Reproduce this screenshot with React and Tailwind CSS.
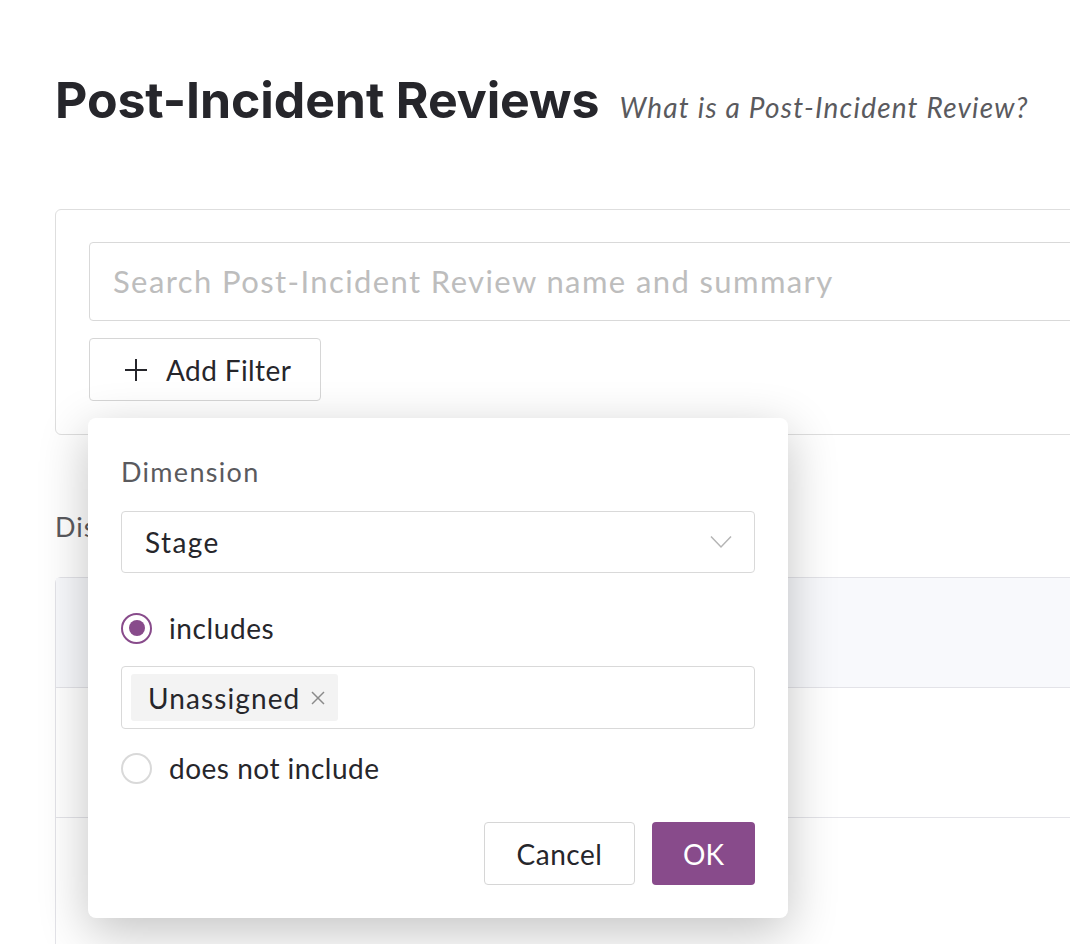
export default function App() {
  const body = { fontFamily: '"Lato", "Noto Sans", sans-serif' };
  return (
    <div className="relative min-h-[944px] w-[1070px] overflow-hidden bg-white" style={body}>
      <div className="w-[1120px] pl-[55px] pt-[70px]">
        {/* Page header */}
        <div className="flex items-baseline gap-[20px]">
          <h1
            className="text-[50px] font-bold leading-[60px] tracking-[-0.1px] text-[#26262b]"
            style={{ fontFamily: '"Inter", "Noto Sans", sans-serif' }}
          >
            Post-Incident Reviews
          </h1>
          <a className="text-[28px] italic tracking-[1.2px] text-[#5a5a5e]">What is a Post-Incident Review?</a>
        </div>

        {/* Search + filter card */}
        <div className="mt-[79px] rounded-[6px] border border-[#dedede] px-[33px] pt-[32px] pb-[33px]">
          <div className="flex h-[79px] items-center rounded-[4px] border border-[#d9d9d9] pl-[23px] text-[31px] tracking-[1.4px] text-[#bdbdbd]">
            Search Post-Incident Review name and summary
          </div>
          <button className="mt-[17px] flex h-[63px] w-[232px] items-center gap-[18px] rounded-[4px] border border-[#d6d6d6] pl-[34px] text-[28px] tracking-[0.4px] text-[#26262b]">
            <svg width="24" height="24" viewBox="0 0 24 24" fill="none" stroke="#26262b" strokeWidth="2">
              <line x1="12" y1="1" x2="12" y2="23" />
              <line x1="1" y1="12" x2="23" y2="12" />
            </svg>
            Add Filter
          </button>
        </div>

        <div className="mt-[74px] text-[27px] leading-[36px] tracking-[1px] text-[#5a5a5e]">Displaying</div>

        {/* Results table */}
        <div className="mt-[32px] rounded-tl-[6px] border-t border-l border-[#e3e3e8]">
          <div className="h-[110px] border-b border-[#e3e3e8] bg-[#f8f9fc]" />
          <div className="h-[130px] border-b border-[#e3e3e8]" />
          <div className="h-[130px] border-b border-[#e3e3e8]" />
        </div>
      </div>

      {/* Filter popover */}
      <div className="absolute left-[88px] top-[418px] w-[700px] rounded-[8px] bg-white px-[33px] pt-[36px] pb-[33px] shadow-[0_14px_50px_rgba(0,0,0,0.24)]">
        <div className="text-[27px] leading-[36px] tracking-[1.3px] text-[#5a5a5e]">Dimension</div>
        <div className="mt-[21px] flex h-[62px] items-center justify-between rounded-[4px] border border-[#d9d9d9] pl-[23px] pr-[22px] text-[28px] tracking-[1.4px] text-[#26262b]">
          <span>Stage</span>
          <svg width="22" height="14" viewBox="0 0 22 14" fill="none" stroke="#b5b5b5" strokeWidth="1.5">
            <polyline points="1,1.5 11,12 21,1.5" />
          </svg>
        </div>

        <label className="mt-[37px] flex h-[36px] items-center gap-[17px] text-[28px] tracking-[0.6px] text-[#26262b]">
          <span className="flex h-[31px] w-[31px] items-center justify-center rounded-full border-2 border-[#884b8b]">
            <span className="h-[16px] w-[16px] rounded-full bg-[#884b8b]" />
          </span>
          includes
        </label>

        <div className="mt-[20px] flex h-[63px] items-center rounded-[4px] border border-[#d9d9d9] pl-[9px]">
          <span className="flex h-[47px] items-center gap-[11px] rounded-[3px] bg-[#f3f3f3] pl-[17px] pr-[13px] text-[28px] tracking-[1.1px] text-[#26262b]">
            Unassigned
            <svg width="14" height="14" viewBox="0 0 14 14" fill="none" stroke="#8a8a8a" strokeWidth="1.5">
              <line x1="1" y1="1" x2="13" y2="13" />
              <line x1="13" y1="1" x2="1" y2="13" />
            </svg>
          </span>
        </div>

        <label className="mt-[21px] flex h-[36px] items-center gap-[17px] text-[28px] tracking-[0.5px] text-[#26262b]">
          <span className="h-[31px] w-[31px] rounded-full border-2 border-[#d9d9d9]" />
          does not include
        </label>

        <div className="mt-[36px] flex justify-end gap-[17px]">
          <button className="h-[63px] w-[151px] rounded-[4px] border border-[#d6d6d6] bg-white text-[28px] tracking-[0.5px] text-[#26262b]">
            Cancel
          </button>
          <button className="h-[63px] w-[103px] rounded-[4px] bg-[#884b8b] text-[28px] text-white">OK</button>
        </div>
      </div>
    </div>
  );
}
